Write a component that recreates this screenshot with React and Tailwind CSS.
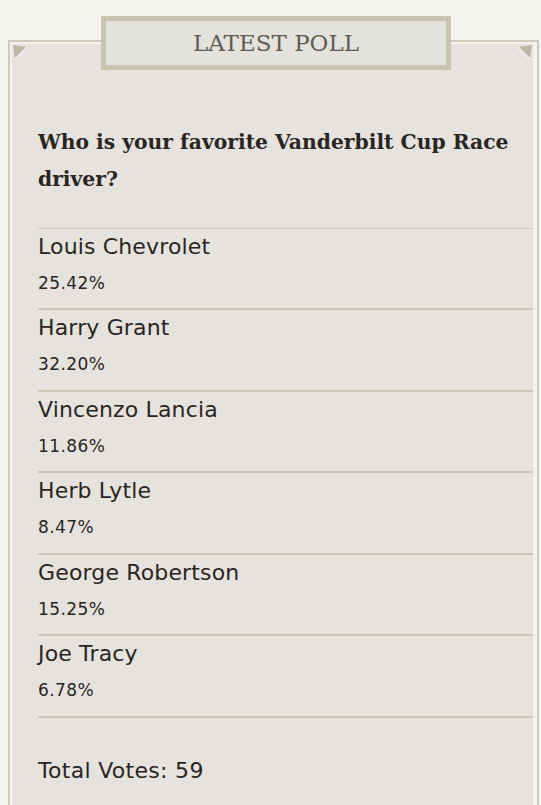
import React from "react";

const results = [
  { name: "Louis Chevrolet", pct: "25.42%" },
  { name: "Harry Grant", pct: "32.20%" },
  { name: "Vincenzo Lancia", pct: "11.86%" },
  { name: "Herb Lytle", pct: "8.47%" },
  { name: "George Robertson", pct: "15.25%" },
  { name: "Joe Tracy", pct: "6.78%" },
];

function Corner({ flip }) {
  return (
    <svg
      width="15"
      height="15"
      viewBox="0 0 15 15"
      className={`absolute top-[1px] ${flip ? "right-[1px] -scale-x-100" : "left-[1px]"}`}
    >
      <polygon points="0,0 14,2 2,14" fill="#b9b7a7" />
      <line x1="14" y1="2" x2="2" y2="14" stroke="#f4f3ef" strokeWidth="1.5" />
    </svg>
  );
}

export default function App() {
  return (
    <div className="min-h-screen bg-[#f3f2ee] pt-[40px] overflow-hidden">
      <div className="ml-[8px] w-[531px] border-2 border-b-0 border-[#cdcbbc] bg-[#f3f2ee] pl-[2px] pr-[4px] pt-[2px]">
        <div className="relative flow-root bg-[#e6e3de] pb-[40px]">
          <Corner />
          <Corner flip />

          {/* Heading tab */}
          <div className="relative ml-[89px] -mt-[28px] flex h-[54px] w-[350px] items-center justify-center border-[5px] border-[#c6c4b3] bg-[#e4e2dd]">
            <h2 className="font-['DejaVu_Serif',serif] text-[23px] uppercase text-[#5f5d52]">
              Latest Poll
            </h2>
          </div>

          <div className="pl-[26px]">
            <div className="mt-[54px] border-b border-[#cfccc2] pb-[29.5px] pr-[10px]">
              <p className="font-['DejaVu_Serif',serif] text-[20.3px] font-bold leading-[37px] text-[#2a2520]">
                Who is your favorite Vanderbilt Cup Race driver?
              </p>
            </div>

            <ul>
              {results.map((r) => (
                <li
                  key={r.name}
                  className="border-b-2 border-[#cac7b9] pb-[7.5px] font-['DejaVu_Sans',sans-serif] text-[#2a2520]"
                >
                  <div className="text-[22px] leading-[36px] tracking-[0.15px]">{r.name}</div>
                  <div className="text-[17px] leading-[36px] tracking-[0.4px]">{r.pct}</div>
                </li>
              ))}
            </ul>

            <div className="mt-[35px] font-['DejaVu_Sans',sans-serif] text-[22px] leading-[36px] tracking-[0.3px] text-[#2a2520]">
              Total Votes: 59
            </div>
          </div>
        </div>
      </div>
    </div>
  );
}
